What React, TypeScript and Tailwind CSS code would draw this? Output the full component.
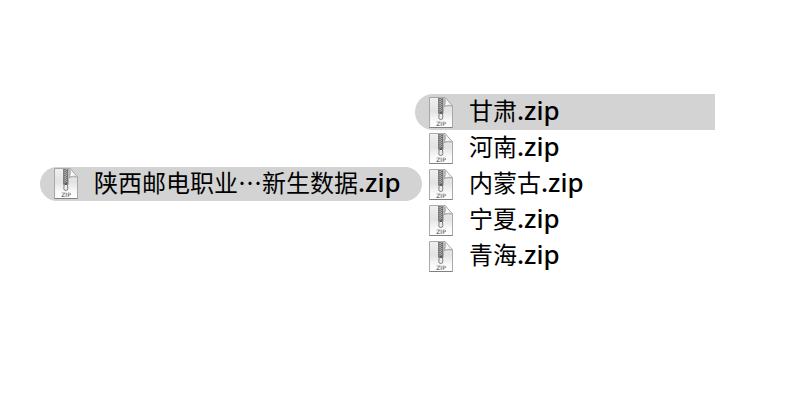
import React from "react";

const files = ["甘肃", "河南", "内蒙古", "宁夏", "青海"];

function ZipIcon() {
  return (
    <svg viewBox="0 0 24 31" className="h-[31px] w-6 shrink-0" aria-hidden="true">
      <defs>
        <linearGradient id="paper" x1="0" y1="0" x2="0" y2="1">
          <stop offset="0" stopColor="#f0f0f0" />
          <stop offset="0.45" stopColor="#e2e2e2" />
          <stop offset="0.75" stopColor="#f8f8f8" />
          <stop offset="1" stopColor="#ffffff" />
        </linearGradient>
        <linearGradient id="fold" x1="0" y1="1" x2="1" y2="0">
          <stop offset="0" stopColor="#ffffff" />
          <stop offset="0.5" stopColor="#f4f4f4" />
          <stop offset="1" stopColor="#c4c4c4" />
        </linearGradient>
      </defs>
      <path d="M.5 .5H16L23.5 9V30.5H.5Z" fill="url(#paper)" stroke="#a0a0a0" strokeWidth="0.9" />
      <path d="M.5 30.5H23.5" stroke="#808080" strokeWidth="1" />
      <path d="M14.6 1Q16 5 14.8 10.6Q19 8 23 10Z" fill="#b0b0b0" />
      <path d="M16 .5Q17.2 5 15.6 8.9Q20 7.5 23.5 9Z" fill="url(#fold)" stroke="#999" strokeWidth="0.6" />
      <path d="M9.3 .5H14.3V16.5H9.3Z" fill="#b4b4b4" />
      <path d="M9.8 1V16.5M13.8 1V16.5" stroke="#5a5a5a" strokeWidth="0.9" />
      <path d="M11 1V16.5" stroke="#666" strokeWidth="1.4" strokeDasharray="1 1" />
      <path d="M12.6 2V16.5" stroke="#666" strokeWidth="1.4" strokeDasharray="1 1" />
      <path d="M10.3 15H13.3L13.8 20.5Q13.8 22.5 11.8 22.5Q9.8 22.5 9.8 20.5Z" fill="#ececec" stroke="#707070" strokeWidth="0.9" />
      <path d="M10.6 15H13V17H10.6Z" fill="#5c5c5c" />
      <text x="12" y="28.6" textAnchor="middle" fontSize="6" fontFamily="DejaVu Sans, sans-serif" fill="#444">
        ZIP
      </text>
    </svg>
  );
}

function FileRow({ children, className = "" }: { children: React.ReactNode; className?: string }) {
  return (
    <button type="button" className={`flex w-full items-center gap-4 pl-3.5 text-left whitespace-nowrap ${className}`}>
      <ZipIcon />
      <span>
        {children}
        <span className="font-['Noto_Sans',sans-serif] text-[26px] leading-none font-medium">.zip</span>
      </span>
    </button>
  );
}

export default function App() {
  return (
    <main className="flex min-h-screen items-start bg-white pt-[94px] pr-[85px] pl-10 font-['DejaVu_Sans','Noto_Sans_CJK_SC',sans-serif] text-2xl leading-[34px] text-black">
      <section className="w-[382px] shrink-0 pt-[73px]">
        <FileRow className="h-[34px] rounded-full bg-[#d3d3d3] pb-0.5">
          陕西邮电职业<span className="font-['Noto_Sans_CJK_SC',sans-serif]">…</span>新生数据
        </FileRow>
      </section>
      <ul className="-ml-[7px] min-w-0 flex-1">
        {files.map((name, index) => (
          <li key={name}>
            <FileRow className={index === 0 ? "h-9 rounded-l-full bg-[#d3d3d3]" : "h-9"}>{name}</FileRow>
          </li>
        ))}
      </ul>
    </main>
  );
}
